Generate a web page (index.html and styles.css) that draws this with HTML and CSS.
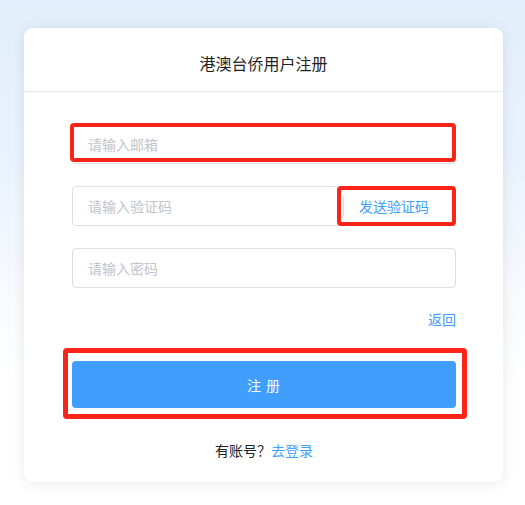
FILE: index.html
```html
<!DOCTYPE html>
<html lang="zh-CN">
<head>
<meta charset="utf-8">
<title>港澳台侨用户注册</title>
<link rel="stylesheet" href="styles.css">
</head>
<body>
<div class="page">
  <div class="card">
    <div class="card-header">港澳台侨用户注册</div>
    <form class="form">
      <div class="field">
        <input class="input" type="text" placeholder="请输入邮箱">
        <span class="mark mark-email"></span>
      </div>
      <div class="field">
        <input class="input" type="text" placeholder="请输入验证码">
        <span class="suffix">发送验证码</span>
        <span class="mark mark-code"></span>
      </div>
      <div class="field">
        <input class="input" type="password" placeholder="请输入密码">
      </div>
      <div class="back-row"><a class="link" href="#">返回</a></div>
      <div class="submit-wrap">
        <button class="submit" type="button">注 册</button>
        <span class="mark mark-submit"></span>
      </div>
      <div class="footer">有账号？<a class="link" href="#">去登录</a></div>
    </form>
  </div>
</div>
</body>
</html>
```
FILE: styles.css
```css
* { box-sizing: border-box; }
html, body {
  margin: 0;
  padding: 0;
}
body {
  font-family: "Noto Sans CJK SC", "Noto Sans", sans-serif;
  font-size: 14px;
  color: #303133;
  background: linear-gradient(180deg, #e2eefb 0px, #e8f2fd 150px, #f6f9fd 280px, #ffffff 380px);
  min-height: 505px;
}
.page {
  padding: 28px 0 0 24px;
}
.card {
  width: 479px;
  background: #fff;
  border-radius: 9px;
  box-shadow: 0 2px 14px rgba(0, 0, 0, 0.09);
  padding-bottom: 22px;
}
.card-header {
  padding: 24px 0 17px;
  line-height: 22px;
  font-size: 16px;
  color: #1f1f1f;
  text-align: center;
  border-bottom: 1px solid #e4e6ea;
}
.form {
  padding: 32px 47px 0 48px;
  margin: 0;
}
.field {
  position: relative;
  display: flex;
  align-items: center;
  height: 40px;
  border: 1px solid #dcdfe6;
  border-radius: 4px;
  margin-bottom: 22px;
  background: #fff;
}
.input {
  flex: 1;
  min-width: 0;
  height: 100%;
  border: 0;
  outline: 0;
  background: transparent;
  padding: 0 15px;
  font-family: inherit;
  font-size: 14px;
  color: #606266;
}
.input::placeholder { color: #c0c4cc; }
.suffix {
  width: 112px;
  flex: none;
  height: 20px;
  line-height: 20px;
  border-left: 1px solid #dcdfe6;
  padding-left: 15px;
  color: #409eff;
  font-size: 14px;
}
.mark {
  position: absolute;
  border: 4px solid #fb2418;
  border-radius: 4px;
  pointer-events: none;
}
.mark-email { top: -2px; left: -3px; right: -1px; bottom: 1px; }
.mark-code { top: -1px; bottom: -1px; right: -1px; width: 119px; }
.mark-submit { top: -13px; left: -9px; right: -11px; bottom: -11px; border-width: 5px; }
.back-row {
  text-align: right;
  line-height: 20px;
  margin-top: -1px;
}
.link {
  color: #409eff;
  text-decoration: none;
}
.submit-wrap {
  position: relative;
  margin-top: 32px;
}
.submit {
  display: block;
  width: 100%;
  height: 47px;
  border: 0;
  border-radius: 4px;
  background: #409eff;
  color: #fff;
  font-family: inherit;
  font-size: 14px;
  letter-spacing: 1px;
}
.footer {
  margin-top: 32px;
  text-align: center;
  line-height: 20px;
  color: #222;
}
```
